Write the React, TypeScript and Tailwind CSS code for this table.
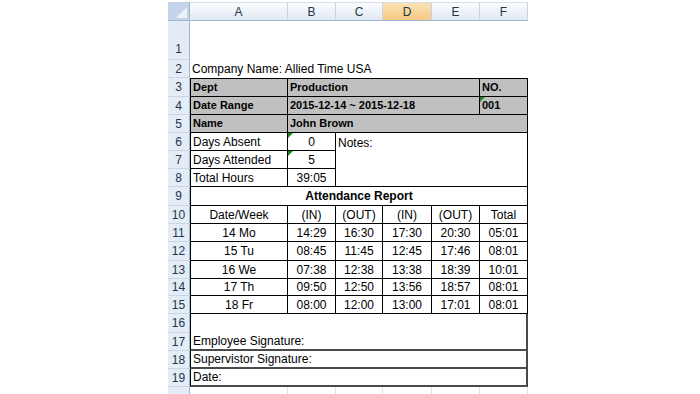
import React from "react";

const cols = ["A", "B", "C", "D", "E", "F"];

const rows = [
  { day: "14 Mo", t: ["14:29", "16:30", "17:30", "20:30", "05:01"] },
  { day: "15 Tu", t: ["08:45", "11:45", "12:45", "17:46", "08:01"] },
  { day: "16 We", t: ["07:38", "12:38", "13:38", "18:39", "10:01"] },
  { day: "17 Th", t: ["09:50", "12:50", "13:56", "18:57", "08:01"] },
  { day: "18 Fr", t: ["08:00", "12:00", "13:00", "17:01", "08:01"] },
];

const rowStarts = [
  "row-start-11",
  "row-start-12",
  "row-start-13",
  "row-start-14",
  "row-start-15",
  "row-start-16",
];

function Flag() {
  return (
    <span className="absolute left-0 top-0 h-0 w-0 border-t-[5px] border-r-[5px] border-t-[#1a8a1a] border-r-transparent" />
  );
}

function RowHead({ n, className }: { n: string; className: string }) {
  return (
    <div
      className={`col-start-1 flex items-center justify-center border-r border-b border-r-[#9eb6ce] border-b-[#c9d6e8] bg-[#e4ecf7] text-[12px] text-[#27354a] ${className}`}
    >
      {n}
    </div>
  );
}

export default function App() {
  return (
    <div className="h-[394px] w-[700px] overflow-hidden bg-white font-['Liberation_Sans',Arial,sans-serif] text-black">
      <div className="ml-[168px] grid w-[360px] grid-cols-[22px_98px_48px_47px_49px_48px_48px] grid-rows-[21px_39px_18px_19px_18px_18px_18px_18px_18px_19px_18px_18px_19px_18px_17px_18px_19px_18px_18px_18px_7px] text-[12px]">
        {/* column header */}
        <div className="col-start-1 row-start-1 mt-[2px] border-r border-b border-r-[#9eb6ce] border-b-[#9eb6ce] bg-[#c3d4ea] relative">
          <svg className="absolute bottom-[2px] right-[2px]" width="11" height="11" viewBox="0 0 11 11">
            <polygon points="11,0 11,11 0,11" fill="#eef3fa" />
          </svg>
        </div>
        {cols.map((c) => (
          <div
            key={c}
            className={`row-start-1 mt-[2px] flex items-center justify-center border-r border-b border-t border-t-[#d5dfec] border-r-[#c5d3e6] border-b-[#9eb6ce] text-[12px] text-[#27354a] ${
              c === "D"
                ? "bg-linear-to-b from-[#fbe3b4] to-[#f6c983]"
                : "bg-linear-to-b from-[#fbfcfe] to-[#e1e9f4]"
            }`}
          >
            {c}
          </div>
        ))}

        {/* row headers */}
        <RowHead n="1" className="row-start-2 items-end pb-[1px]" />
        <RowHead n="2" className="row-start-3" />
        <RowHead n="3" className="row-start-4" />
        <RowHead n="4" className="row-start-5" />
        <RowHead n="5" className="row-start-6" />
        <RowHead n="6" className="row-start-7" />
        <RowHead n="7" className="row-start-8" />
        <RowHead n="8" className="row-start-9" />
        <RowHead n="9" className="row-start-10" />
        <RowHead n="10" className="row-start-11" />
        <RowHead n="11" className="row-start-12" />
        <RowHead n="12" className="row-start-13" />
        <RowHead n="13" className="row-start-14" />
        <RowHead n="14" className="row-start-15" />
        <RowHead n="15" className="row-start-16" />
        <RowHead n="16" className="row-start-17" />
        <RowHead n="17" className="row-start-18" />
        <RowHead n="18" className="row-start-19" />
        <RowHead n="19" className="row-start-20" />
        <div className="col-start-1 row-start-21 border-r border-r-[#9eb6ce] bg-[#e4ecf7]" />

        {/* row 2 */}
        <div className="col-start-2 col-span-6 row-start-3 flex items-center whitespace-nowrap pl-[2px]">
          Company Name: Allied Time USA
        </div>

        {/* rows 3-5, grey block */}
        <div className="col-start-2 row-start-4 flex items-center border border-black bg-[#c0c0c0] pl-[2px] text-[11px] font-bold">
          Dept
        </div>
        <div className="col-start-3 col-span-4 row-start-4 flex items-center border-t border-r border-b border-black bg-[#c0c0c0] pl-[2px] text-[11px] font-bold">
          Production
        </div>
        <div className="col-start-7 row-start-4 flex items-center border-t border-r border-b border-black bg-[#c0c0c0] pl-[2px] text-[11px] font-bold">
          NO.
        </div>
        <div className="col-start-2 row-start-5 flex items-center border-l border-r border-b border-black bg-[#c0c0c0] pl-[2px] text-[11px] font-bold">
          Date Range
        </div>
        <div className="col-start-3 col-span-4 row-start-5 flex items-center border-r border-b border-black bg-[#c0c0c0] pl-[2px] text-[11px] font-bold">
          2015-12-14 ~ 2015-12-18
        </div>
        <div className="relative col-start-7 row-start-5 flex items-center border-r border-b border-black bg-[#c0c0c0] pl-[2px] text-[11px] font-bold">
          <Flag />
          001
        </div>
        <div className="col-start-2 row-start-6 flex items-center border-l border-r border-b border-black bg-[#c0c0c0] pl-[2px] text-[11px] font-bold">
          Name
        </div>
        <div className="col-start-3 col-span-5 row-start-6 flex items-center border-r border-b border-black bg-[#c0c0c0] pl-[2px] text-[11px] font-bold">
          John Brown
        </div>

        {/* rows 6-8 */}
        <div className="col-start-2 row-start-7 flex items-center border-l border-r border-b border-black pl-[2px]">
          Days Absent
        </div>
        <div className="relative col-start-3 row-start-7 flex items-center justify-center border-r border-b border-black">
          <Flag />0
        </div>
        <div className="col-start-2 row-start-8 flex items-center border-l border-r border-b border-black pl-[2px]">
          Days Attended
        </div>
        <div className="relative col-start-3 row-start-8 flex items-center justify-center border-r border-b border-black">
          <Flag />5
        </div>
        <div className="col-start-2 row-start-9 flex items-center border-l border-r border-b border-black pl-[2px]">
          Total Hours
        </div>
        <div className="col-start-3 row-start-9 flex items-center justify-center border-r border-b border-black">
          39:05
        </div>
        <div className="col-start-4 col-span-4 row-start-7 row-span-3 border-r border-b border-black pl-[2px] pt-[1px]">
          Notes:
        </div>

        {/* row 9 */}
        <div className="col-start-2 col-span-6 row-start-10 flex items-center justify-center border-l border-r border-b border-black font-bold">
          Attendance Report
        </div>

        {/* rows 10-15 */}
        {["Date/Week", "(IN)", "(OUT)", "(IN)", "(OUT)", "Total"].map((h, i) => (
          <div
            key={"h" + i}
            className={`${rowStarts[0]} flex items-center justify-center border-r border-b border-black ${
              i === 0 ? "border-l" : ""
            }`}
          >
            {h}
          </div>
        ))}
        {rows.map((r, ri) =>
          [r.day, ...r.t].map((v, i) => (
            <div
              key={ri + "-" + i}
              className={`${rowStarts[ri + 1]} flex items-center justify-center border-r border-b border-black ${
                i === 0 ? "border-l" : ""
              }`}
            >
              {v}
            </div>
          ))
        )}

        {/* rows 16-19 */}
        <div className="col-start-2 col-span-6 row-start-17 border-l border-r-2 border-l-black border-r-[#4a4a4a]" />
        <div className="col-start-2 col-span-6 row-start-18 flex items-center border-l border-r-2 border-b-2 border-l-black border-r-[#4a4a4a] border-b-[#4a4a4a] pl-[2px]">
          Employee Signature:
        </div>
        <div className="col-start-2 col-span-6 row-start-19 flex items-center border-l border-r-2 border-b-2 border-l-black border-r-[#4a4a4a] border-b-[#4a4a4a] pl-[2px]">
          Supervistor Signature:
        </div>
        <div className="col-start-2 col-span-6 row-start-20 flex items-center border-l border-r-2 border-b-2 border-l-black border-r-[#4a4a4a] border-b-[#4a4a4a] pl-[2px]">
          Date:
        </div>

        {/* row 20, faint gridlines */}
        {cols.map((c) => (
          <div key={"g" + c} className="row-start-21 border-r border-r-[#dedede]" />
        ))}
      </div>
    </div>
  );
}
